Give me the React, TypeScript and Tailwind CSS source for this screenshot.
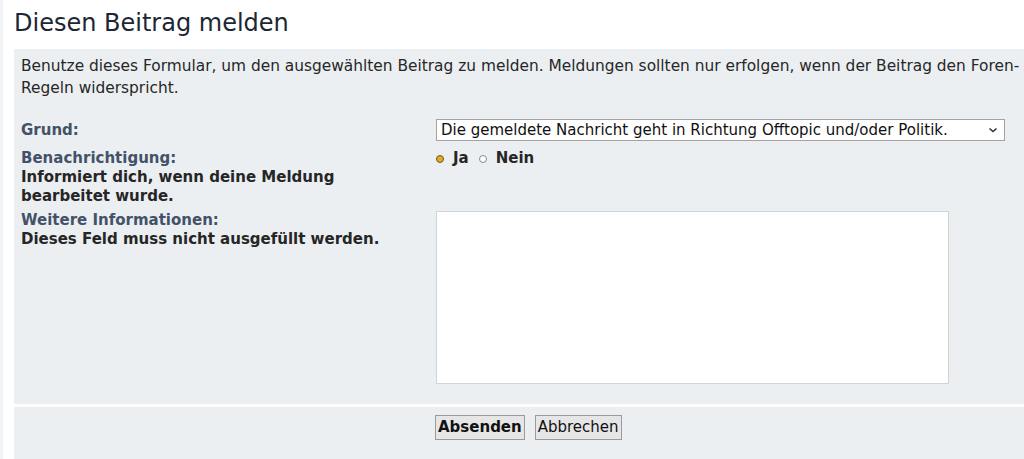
import React from "react";

export default function App() {
  return (
    <div className="flex min-h-[459px] bg-white font-['DejaVu_Sans',sans-serif] text-[#2a2a2a]">
      <div className="w-[3px] bg-[#f1f4f6]" />
      <div className="flex-1 pl-[11px] overflow-hidden">
        <h1 className="pt-[6px] pb-[9px] text-[24px] leading-[34px] text-[#1c2733]">Diesen Beitrag melden</h1>
        <div className="bg-[#ebeff2] pl-[7px] pt-[6px] pb-[20px]">
          <p className="whitespace-nowrap text-[15.4px] leading-[22px] text-[#272727]">
            Benutze dieses Formular, um den ausgewählten Beitrag zu melden. Meldungen sollten nur erfolgen, wenn der Beitrag den Foren-
            <br />
            Regeln widerspricht.
          </p>
          <div className="mt-[20px] grid grid-cols-[415px_1fr] text-[15px] leading-[19px]">
            <div className="flex items-center font-bold text-[#435268]">Grund:</div>
            <div>
              <div className="flex h-[22px] w-[569px] items-center justify-between border border-[#a3a3a3] bg-white pl-[4px] pr-[6px] text-[15px] text-[#111]">
                <span>Die gemeldete Nachricht geht in Richtung Offtopic und/oder Politik.</span>
                <svg width="10" height="6" viewBox="0 0 10 6">
                  <path d="M1.5 1.5 L5 4.5 L8.5 1.5" fill="none" stroke="#333" strokeWidth="1.6" />
                </svg>
              </div>
            </div>

            <div className="mt-[8px] pr-[60px] font-bold">
              <div className="text-[#435268]">Benachrichtigung:</div>
              <div className="text-[#262626]">Informiert dich, wenn deine Meldung bearbeitet wurde.</div>
            </div>
            <div className="mt-[8px] flex items-start font-bold text-[#262626]">
              <div className="flex items-center gap-[10px]">
                <span className="flex items-center gap-[9px]">
                  <span className="h-[8px] w-[8px] rounded-full border-[1.5px] border-[#6b5a2a] bg-[#e6ac1e]" />
                  Ja
                </span>
                <span className="flex items-center gap-[9px]">
                  <span className="h-[8px] w-[8px] rounded-full border border-[#888] bg-white" />
                  Nein
                </span>
              </div>
            </div>

            <div className="mt-[5px] font-bold">
              <div className="text-[#435268]">Weitere Informationen:</div>
              <div className="text-[#262626]">Dieses Feld muss nicht ausgefüllt werden.</div>
            </div>
            <div className="mt-[5px]">
              <div className="h-[173px] w-[513px] border border-[#cfd4d8] bg-white" />
            </div>
          </div>
        </div>
        <div className="mt-[3px] flex h-[52px] gap-[10px] bg-[#ebeff2] pl-[421px] pt-[8px]">
          <button className="h-[25px] border border-[#9a9a9a] bg-[#e6e6e6] px-[2px] text-[15px] font-bold text-[#111]">Absenden</button>
          <button className="h-[25px] border border-[#9a9a9a] bg-[#e6e6e6] px-[2px] text-[15px] text-[#111]">Abbrechen</button>
        </div>
      </div>
    </div>
  );
}
